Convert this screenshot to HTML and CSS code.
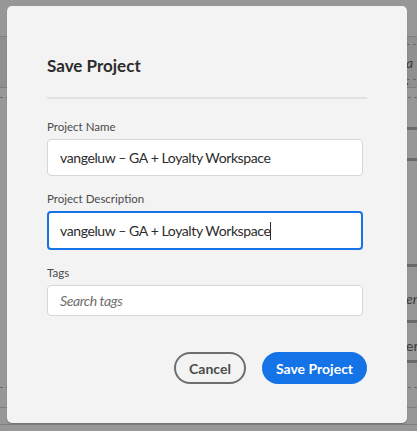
FILE: index.html
```html
<!DOCTYPE html>
<html>
<head>
<meta charset="utf-8">
<link rel="stylesheet" href="styles.css">
</head>
<body>
<div class="backdrop">
  <div class="bg-line solid" style="top:36px"></div>
  <div class="bg-band" style="top:37px;height:50px"></div>
  <div class="bg-line solid" style="top:87px"></div>
  <div class="bg-line dashed" style="top:97px"></div>
  <div class="bg-line dashed right" style="top:44px"></div>
  <div class="bg-text right-text" style="top:54px">a .</div>
  <div class="bg-line dashed right" style="top:79px"></div>
  <div class="bg-line thick right" style="top:127px"></div>
  <div class="bg-line thick right" style="top:158px"></div>
  <div class="bg-line thick right" style="top:264px"></div>
  <div class="bg-text right-text" style="top:290px">er</div>
  <div class="bg-line thick right" style="top:320px"></div>
  <div class="bg-text right-text normal" style="top:337px">er</div>
  <div class="bg-line thick right" style="top:360px"></div>
  <div class="bg-line dashed" style="top:387px"></div>
  <div class="bg-line solid" style="top:407px"></div>
  <div class="bg-line solid" style="top:424px"></div>
</div>
<div class="dialog">
  <h1 class="title">Save Project</h1>
  <div class="divider"></div>
  <label class="label">Project Name</label>
  <div class="field">vangeluw – GA + Loyalty Workspace</div>
  <label class="label">Project Description</label>
  <div class="field focused">vangeluw – GA + Loyalty Workspace<span class="caret"></span></div>
  <label class="label">Tags</label>
  <div class="field tags">Search tags</div>
  <div class="actions">
    <button class="btn secondary">Cancel</button>
    <button class="btn primary">Save Project</button>
  </div>
</div>
</body>
</html>
```
FILE: styles.css
```css
html, body {
  margin: 0;
  padding: 0;
}
body {
  width: 417px;
  height: 431px;
  background: #979797;
  position: relative;
  overflow: hidden;
  font-family: Lato, "Noto Sans", sans-serif;
}
.backdrop {
  position: absolute;
  inset: 0;
}
.bg-line {
  position: absolute;
  left: 0;
  right: 0;
  height: 1px;
}
.bg-line.solid { background: #7e7e7e; }
.bg-line.dashed {
  background: repeating-linear-gradient(90deg, #6a6a6a 0 3px, transparent 3px 6px);
}
.bg-line.thick {
  height: 3px;
  background: #6a6a6a;
}
.bg-line.right { left: 407px; }
.bg-band {
  position: absolute;
  left: 0;
  right: 0;
  background: #8f8f8f;
}
.bg-text {
  position: absolute;
  font-size: 14px;
  font-style: italic;
  color: #3a3a3a;
}
.bg-text.right-text { left: 406px; }
.bg-text.normal { font-style: normal; }

.dialog {
  position: relative;
  margin: 6px 0 0 7px;
  width: 400px;
  height: 417px;
  box-sizing: border-box;
  background: #f3f3f3;
  border-radius: 5px;
  padding: 49px 40px 0 40px;
  box-shadow: 0 1px 1px rgba(0,0,0,0.25);
  display: flex;
  flex-direction: column;
}
.title {
  margin: 0;
  font-size: 17px;
  line-height: 22px;
  font-weight: 700;
  color: #2c2c2c;
}
.divider {
  height: 2px;
  background: #e1e1e1;
  margin: 20px 0 20px;
}
.label {
  display: block;
  font-size: 11.5px;
  line-height: 16px;
  color: #4b4b4b;
  margin-bottom: 4px;
}
.field {
  box-sizing: border-box;
  width: 316px;
  height: 37px;
  background: #fff;
  border: 1px solid #d6d6d6;
  border-radius: 4px;
  padding: 0 12px;
  font-size: 14px;
  letter-spacing: -0.4px;
  line-height: 35px;
  color: #2c2c2c;
  margin-bottom: 15px;
  white-space: nowrap;
}
.field.focused {
  height: 39px;
  border: 2px solid #1473e6;
  line-height: 35px;
  padding: 0 11px;
  margin-bottom: 15px;
}
.caret {
  display: inline-block;
  width: 1px;
  height: 18px;
  background: #2c2c2c;
  vertical-align: -4px;
}
.field.tags {
  height: 31px;
  line-height: 29px;
  font-style: italic;
  color: #6e6e6e;
  font-size: 14px;
}
.actions {
  display: flex;
  justify-content: flex-end;
  gap: 16px;
  margin-top: 21px;
}
.btn {
  box-sizing: border-box;
  height: 32px;
  border-radius: 16px;
  font-family: inherit;
  font-size: 14px;
  font-weight: 700;
  padding: 0;
  white-space: nowrap;
  cursor: pointer;
}
.btn.secondary {
  width: 72px;
  background: transparent;
  border: 2px solid #6e6e6e;
  color: #4b4b4b;
}
.btn.primary {
  width: 105px;
  background: #1473e6;
  border: 2px solid #1473e6;
  color: #fff;
}
```
